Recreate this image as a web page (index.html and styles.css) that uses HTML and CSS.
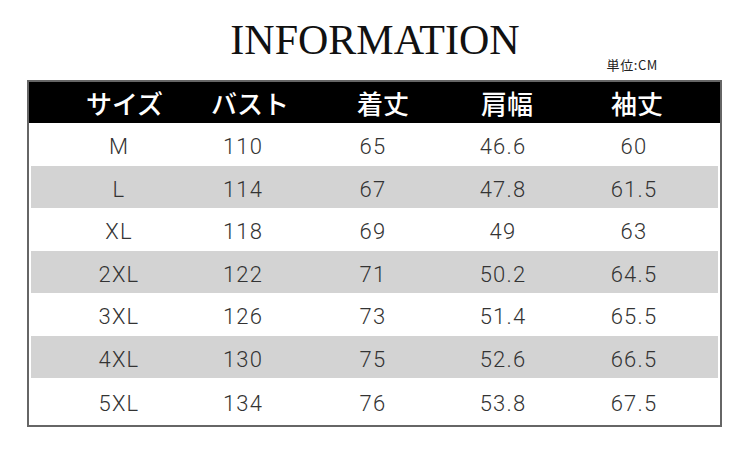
FILE: index.html
```html
<!DOCTYPE html>
<html lang="ja">
<head>
<meta charset="utf-8">
<title>INFORMATION</title>
<link rel="stylesheet" href="styles.css">
</head>
<body>
<div class="page">
  <h1 class="title">INFORMATION</h1>
  <div class="unit">単位:CM</div>
  <div class="table">
    <div class="head">
      <span>サイズ</span><span>バスト</span><span>着丈</span><span>肩幅</span><span>袖丈</span>
    </div>
    <div class="rows">
      <div class="row"><span>M</span><span>110</span><span>65</span><span>46.6</span><span>60</span></div>
      <div class="row alt"><span>L</span><span>114</span><span>67</span><span>47.8</span><span>61.5</span></div>
      <div class="row"><span>XL</span><span>118</span><span>69</span><span>49</span><span>63</span></div>
      <div class="row alt"><span>2XL</span><span>122</span><span>71</span><span>50.2</span><span>64.5</span></div>
      <div class="row"><span>3XL</span><span>126</span><span>73</span><span>51.4</span><span>65.5</span></div>
      <div class="row alt"><span>4XL</span><span>130</span><span>75</span><span>52.6</span><span>66.5</span></div>
      <div class="row last"><span>5XL</span><span>134</span><span>76</span><span>53.8</span><span>67.5</span></div>
    </div>
  </div>
</div>
</body>
</html>
```
FILE: styles.css
```css
html, body {
  margin: 0;
  padding: 0;
  background: #fff;
}

.page {
  width: 750px;
  height: 455px;
  overflow: hidden;
}

.title {
  margin: 0;
  padding-top: 17px;
  font-family: "Liberation Serif", "Times New Roman", serif;
  font-weight: 400;
  font-size: 42px;
  line-height: 46px;
  text-align: center;
  color: #111;
}

.unit {
  margin-top: -5px;
  padding-right: 92px;
  font-family: "Noto Sans CJK JP", "Noto Sans", sans-serif;
  font-size: 13px;
  line-height: 14px;
  letter-spacing: 0.6px;
  text-align: right;
  color: #222;
}

.table {
  margin: 8px 0 0 27px;
  width: 695px;
  box-sizing: border-box;
  border: 2px solid #666;
}

.head {
  display: grid;
  grid-template-columns: 125px 126px 140px 108px 152px;
  align-items: center;
  height: 41px;
  padding-left: 33px;
  background: #000;
  color: #fff;
  font-family: "Noto Sans CJK JP", sans-serif;
  font-weight: 500;
  font-size: 26px;
  line-height: 1;
}

.head span,
.row span {
  text-align: center;
}

.rows {
  padding: 0 2px;
}

.row {
  display: grid;
  grid-template-columns: 124px 124px 136px 124px 138px;
  align-items: center;
  box-sizing: border-box;
  height: 43px;
  padding: 5px 0 0 26px;
  font-family: Roboto, "Liberation Sans", sans-serif;
  font-weight: 300;
  font-size: 22px;
  letter-spacing: 1.2px;
  line-height: 1;
  color: #333;
}

.row.alt {
  height: 42px;
  background: #d3d3d3;
}

.row.last {
  height: 47px;
}
```
